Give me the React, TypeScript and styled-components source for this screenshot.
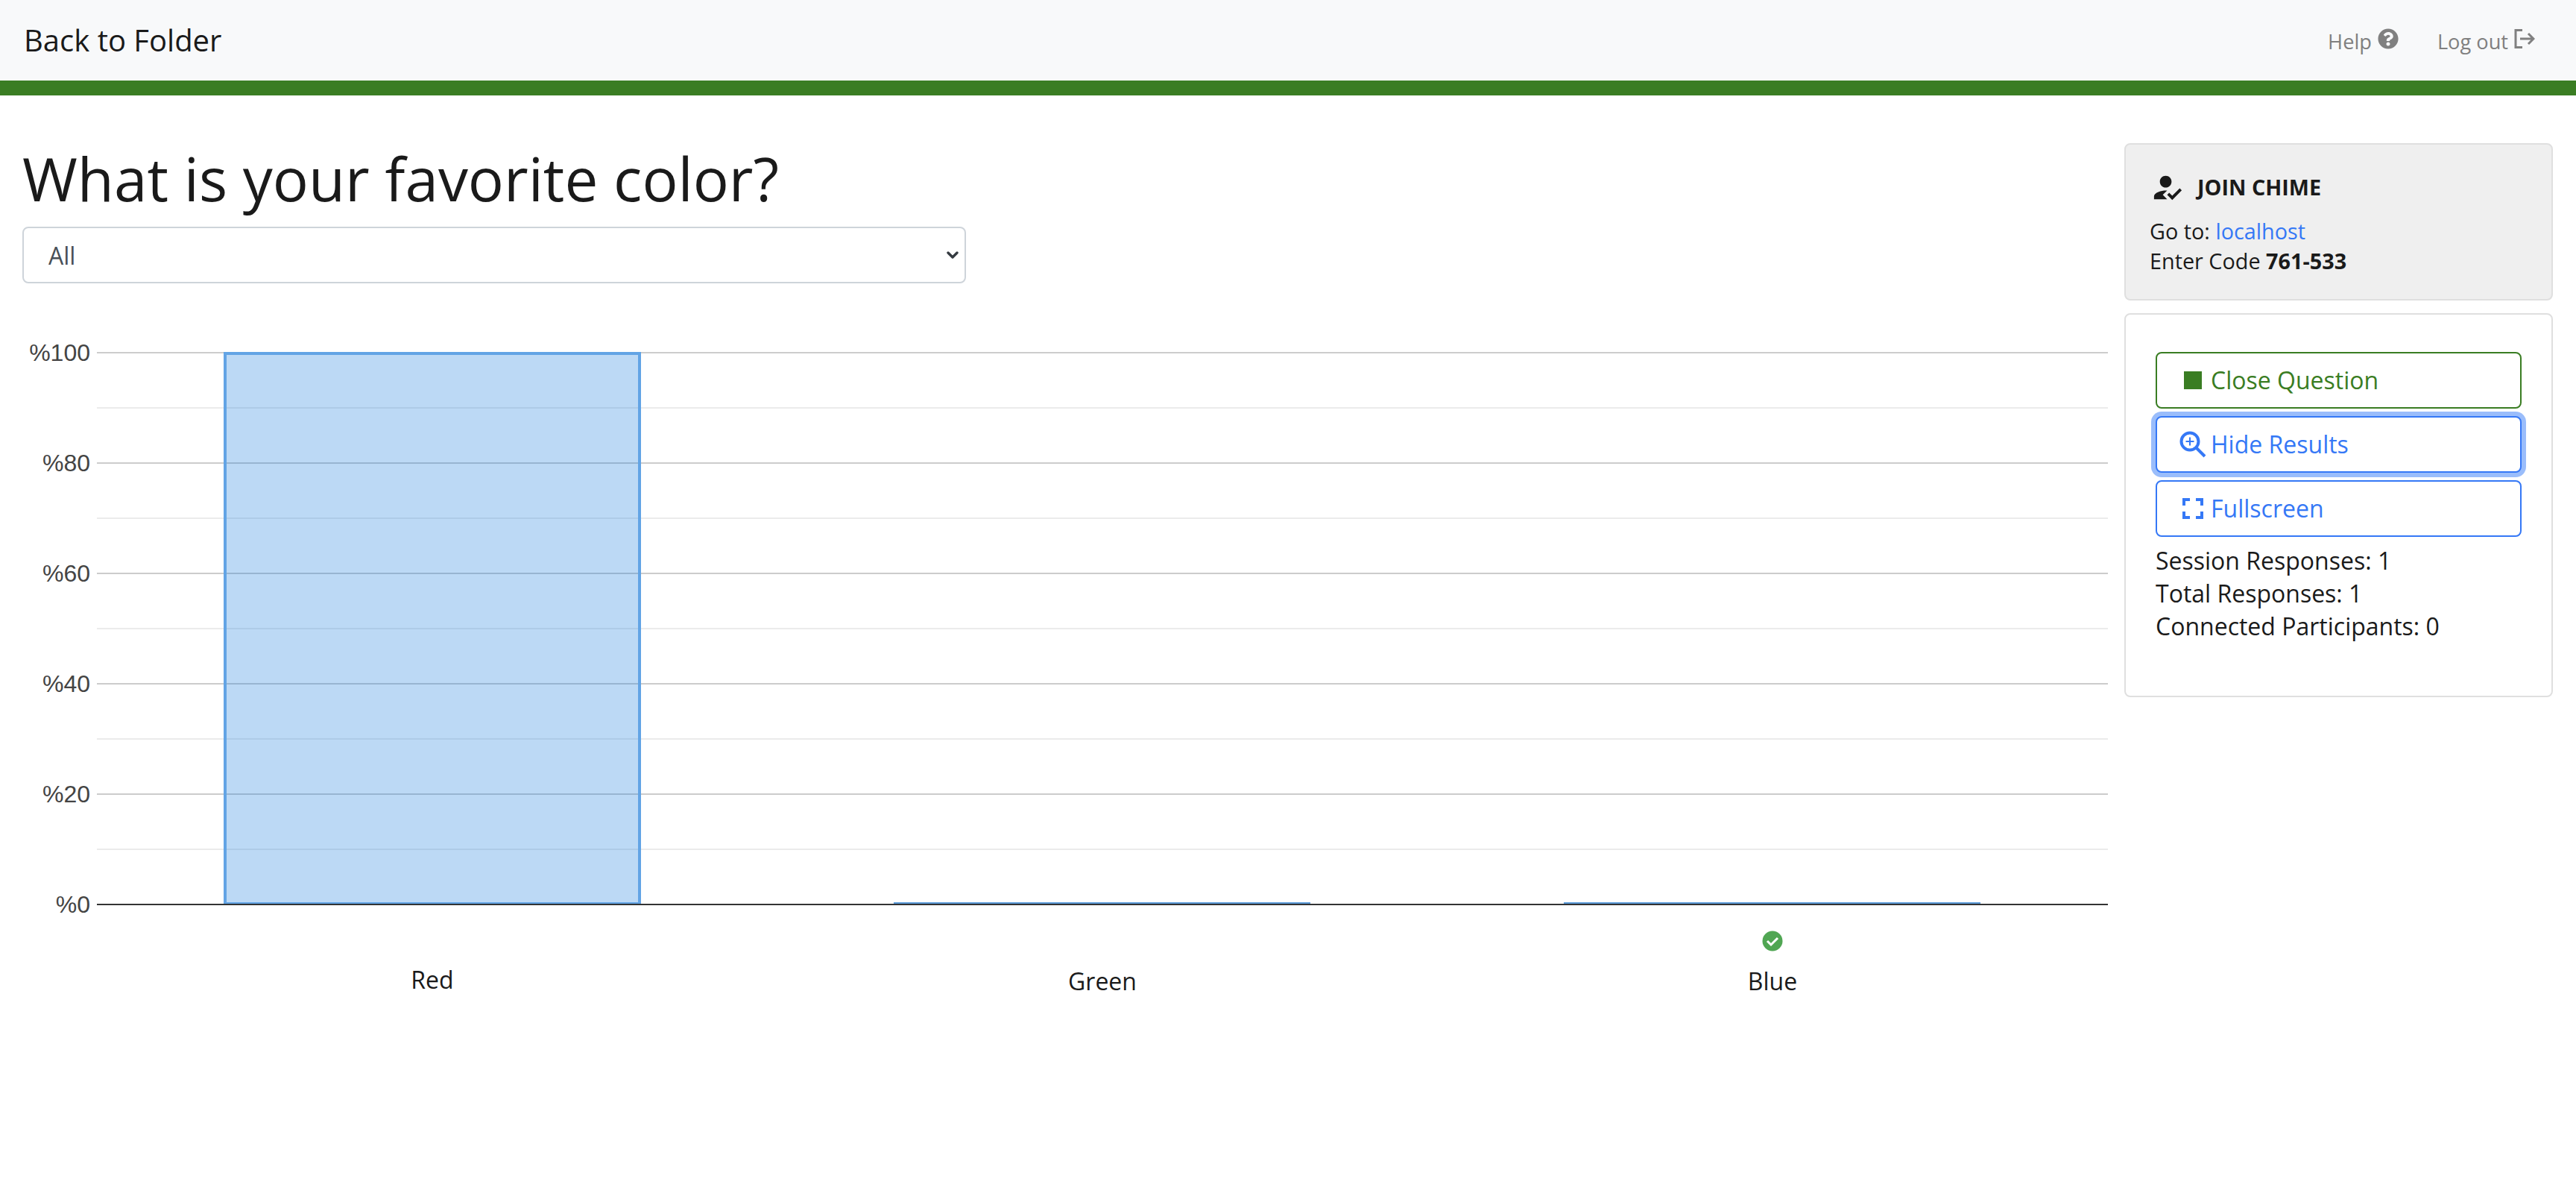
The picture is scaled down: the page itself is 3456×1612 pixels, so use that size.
import React from 'react';
import styled, { createGlobalStyle } from 'styled-components';
import { FaQuestionCircle } from 'react-icons/fa';
import { MdHowToReg } from 'react-icons/md';

const GlobalStyle = createGlobalStyle`
  html, body {
    margin: 0;
    padding: 0;
    background: #fff;
  }
  body {
    font-family: 'Open Sans', 'Liberation Sans', sans-serif;
    font-size: 32px;
    line-height: 1.5;
    color: #1a1a1a;
  }
`;

const Navbar = styled.nav`
  height: 108px;
  box-sizing: content-box;
  background: #f8f9fa;
  border-bottom: 20px solid #3a7d23;
  display: flex;
  align-items: center;
  justify-content: space-between;
  padding: 0 55px 0 32px;
`;

const Brand = styled.a`
  font-size: 40px;
  line-height: 60px;
  color: #1a1a1a;
`;

const NavLinks = styled.div`
  display: flex;
  align-items: center;
  gap: 52px;
`;

const NavLink = styled.a`
  display: flex;
  align-items: center;
  gap: 8px;
  padding-top: 4px;
  font-size: 27.2px;
  color: #808080;

  svg {
    margin-top: -8px;
  }
`;

const Layout = styled.div`
  display: flex;
  align-items: flex-start;
  padding: 64px 31px 0 0;
  gap: 20px;
`;

const Main = styled.main`
  width: 2830px;
`;

const Title = styled.h1`
  margin: -1px 0 17px 30px;
  font-size: 80px;
  line-height: 96px;
  font-weight: 400;
  color: #1a1a1a;
`;

const Select = styled.select`
  display: block;
  width: 1266px;
  height: 76px;
  margin-left: 30px;
  padding: 0 33px;
  box-sizing: border-box;
  appearance: none;
  background: #fff url("data:image/svg+xml,%3csvg xmlns='http://www.w3.org/2000/svg' viewBox='0 0 16 16'%3e%3cpath fill='none' stroke='%23343a40' stroke-linecap='round' stroke-linejoin='round' stroke-width='3.4' d='M2 5l6 6 6-6'/%3e%3c/svg%3e") no-repeat right 6px center / 20px 16px;
  border: 2px solid #ced4da;
  border-radius: 8px;
  font-family: inherit;
  font-size: 32px;
  color: #495057;
`;

const ChartSvg = styled.svg`
  display: block;
  width: 2830px;
  height: 1000px;
`;

const AxisLabel = styled.text`
  font-family: 'Liberation Sans', Arial, sans-serif;
  font-size: 32px;
  fill: #444;
  text-anchor: end;
`;

const CategoryLabel = styled.text`
  font-family: 'Open Sans', sans-serif;
  font-size: 32px;
  fill: #1a1a1a;
  text-anchor: middle;
`;

const Sidebar = styled.aside`
  width: 575px;
  display: flex;
  flex-direction: column;
  gap: 17px;
`;

const JoinCard = styled.section`
  box-sizing: border-box;
  height: 211px;
  padding: 33px 40px 0 32px;
  background: #efefef;
  border: 2px solid #dfdfdf;
  border-radius: 8px;
  font-size: 28.8px;
  line-height: 40px;
`;

const JoinHeading = styled.h2`
  margin: 0 0 15px;
  display: flex;
  align-items: center;
  gap: 17px;
  font-size: 28.8px;
  line-height: 48px;
  font-weight: 700;
  text-transform: uppercase;
`;

const InlineLink = styled.a`
  color: #3578f6;
`;

const ControlCard = styled.section`
  box-sizing: border-box;
  height: 515px;
  padding: 50px 40px 0;
  border: 2px solid #dfdfdf;
  border-radius: 8px;
  background: #fff;
`;

const Button = styled.button<{ $tone: string; $focused?: boolean }>`
  display: flex;
  align-items: center;
  width: 100%;
  height: 76px;
  margin-bottom: 10px;
  padding: 0 0 0 30px;
  box-sizing: border-box;
  background: #fff;
  border: 2px solid ${(p) => p.$tone};
  border-radius: 8px;
  font-family: inherit;
  font-size: 32px;
  line-height: 48px;
  color: ${(p) => p.$tone};
  box-shadow: ${(p) => (p.$focused ? '0 0 0 6px #9abdfb' : 'none')};
`;

const IconSlot = styled.span`
  width: 36px;
  margin-right: 6px;
  display: flex;
  justify-content: center;
  align-items: center;
`;

const StopSquare = styled.span`
  width: 24px;
  height: 24px;
  background: currentColor;
`;

const Stats = styled.div`
  margin-top: 2px;
  line-height: 44px;
`;

const LogoutIcon = () => (
  <svg width="28" height="26" viewBox="0 0 28 26" fill="none" stroke="currentColor" strokeWidth="3">
    <path d="M11 1.5H2v23h9" />
    <path d="M8 13h18M19 6l7 7-7 7" />
  </svg>
);

const ZoomIcon = () => (
  <svg width="36" height="36" viewBox="0 0 36 36" fill="none" stroke="currentColor">
    <circle cx="14" cy="14" r="11.5" strokeWidth="4" />
    <path d="M23 23l11 11" strokeWidth="4" />
    <path d="M14 8.5v11M8.5 14h11" strokeWidth="2" />
  </svg>
);

const FullscreenIcon = () => (
  <svg width="28" height="28" viewBox="0 0 28 28" fill="none" stroke="currentColor" strokeWidth="4">
    <path d="M2 10V2h8M18 2h8v8M26 18v8h-8M10 26H2v-8" />
  </svg>
);

// chart geometry, in px inside the svg
const plotLeft = 130;
const plotRight = 2828;
const plotTop = 93;
const plotBottom = 833;
const step = (plotBottom - plotTop) / 10;

const ticks = [100, 80, 60, 40, 20, 0];

const answers = [
  { label: 'Red', value: 100, center: 580, labelY: 946 },
  { label: 'Green', value: 0, center: 1479, labelY: 948 },
  { label: 'Blue', value: 0, center: 2378, labelY: 948, correct: true },
];

const ResultsChart = () => (
  <ChartSvg viewBox="0 0 2830 1000">
    {Array.from({ length: 10 }, (_, i) => (
      <line
        key={i}
        x1={plotLeft}
        x2={plotRight}
        y1={plotTop + i * step}
        y2={plotTop + i * step}
        stroke={i % 2 === 0 ? '#ccc' : '#ebebeb'}
        strokeWidth="2"
      />
    ))}
    {ticks.map((t, i) => (
      <AxisLabel key={t} x="121" y={plotTop + i * step * 2 + 11}>
        %{t}
      </AxisLabel>
    ))}
    {answers.map((a) => {
      const height = ((plotBottom - plotTop) * a.value) / 100;
      return (
        <g key={a.label}>
          {height > 0 ? (
            <rect
              x={a.center - 278}
              y={plotBottom - height + 1}
              width={556}
              height={height - 2}
              fill="rgba(32,128,222,0.3)"
              stroke="#62a4e5"
              strokeWidth="4"
            />
          ) : (
            <rect x={a.center - 280} y={plotBottom - 3} width={559} height={2} fill="#5b9bd9" />
          )}
          {a.correct && (
            <g>
              <circle cx={a.center} cy="882" r="13.5" fill="#50a653" />
              <path d="M-7 0l5 5 9-9" transform={`translate(${a.center} 882)`} fill="none" stroke="#fff" strokeWidth="3" />
            </g>
          )}
          <CategoryLabel x={a.center} y={a.labelY}>
            {a.label}
          </CategoryLabel>
        </g>
      );
    })}
    <line x1={plotLeft} x2={plotRight} y1={plotBottom} y2={plotBottom} stroke="#333" strokeWidth="2" />
  </ChartSvg>
);

export default function App() {
  return (
    <>
      <GlobalStyle />
      <Navbar>
        <Brand>Back to Folder</Brand>
        <NavLinks>
          <NavLink>
            Help <FaQuestionCircle size={28} />
          </NavLink>
          <NavLink>
            Log out <LogoutIcon />
          </NavLink>
        </NavLinks>
      </Navbar>
      <Layout>
        <Main>
          <Title>What is your favorite color?</Title>
          <Select defaultValue="All">
            <option>All</option>
          </Select>
          <ResultsChart />
        </Main>
        <Sidebar>
          <JoinCard>
            <JoinHeading>
              <MdHowToReg size={47} />
              Join Chime
            </JoinHeading>
            <div>
              Go to: <InlineLink>localhost</InlineLink>
            </div>
            <div>
              Enter Code <b>761-533</b>
            </div>
          </JoinCard>
          <ControlCard>
            <Button $tone="#3a7d23">
              <IconSlot>
                <StopSquare />
              </IconSlot>
              Close Question
            </Button>
            <Button $tone="#3578f6" $focused>
              <IconSlot>
                <ZoomIcon />
              </IconSlot>
              Hide Results
            </Button>
            <Button $tone="#3578f6">
              <IconSlot>
                <FullscreenIcon />
              </IconSlot>
              Fullscreen
            </Button>
            <Stats>
              <div>Session Responses: 1</div>
              <div>Total Responses: 1</div>
              <div>Connected Participants: 0</div>
            </Stats>
          </ControlCard>
        </Sidebar>
      </Layout>
    </>
  );
}
